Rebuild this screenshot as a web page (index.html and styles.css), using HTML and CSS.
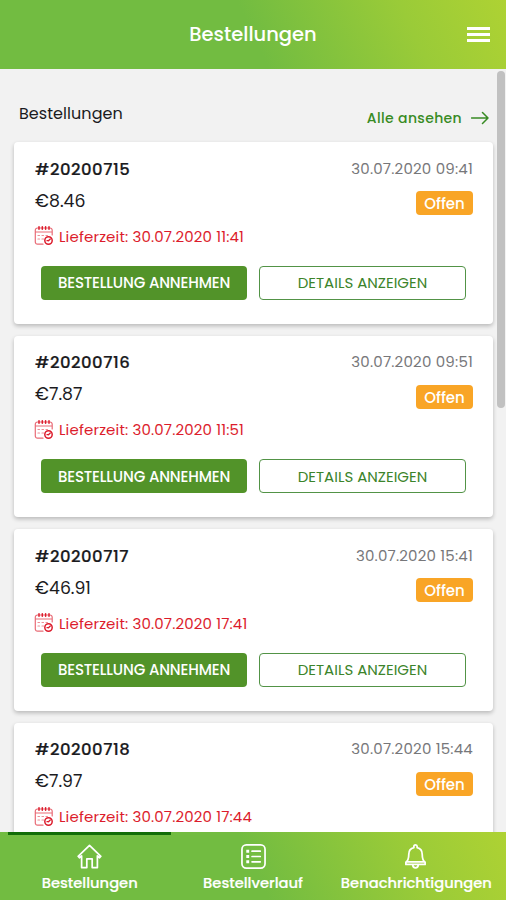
FILE: index.html
```html
<!DOCTYPE html>
<html lang="de">
<head>
<meta charset="utf-8">
<title>Bestellungen</title>
<link rel="stylesheet" href="styles.css">
</head>
<body>
<svg class="defs" aria-hidden="true">
  <symbol id="calendar" viewBox="0 0 20 20">
    <path d="M18.200 9V4.200a2.200 2.200 0 0 0-2.200-2.200H3.500a2.200 2.200 0 0 0-2.200 2.200v11.800a2.200 2.200 0 0 0 2.200 2.200H9M1.300 6h17" opacity=".65"/>
    <path d="M5 .8v2.400M8.300 .8v2.400M11.600 .8v2.400M15 .8v2.400" stroke-width="1.500"/>
    <path d="M4 9.500h1.500M8 9.500h1.500M12 9.500h1.500M4 13h1.500M8 13h1.500" opacity=".5"/>
    <circle cx="14.500" cy="14.500" r="3.700" stroke-width="1.500"/>
    <path d="M14.500 14.700l1.800-1.700M14.500 14.700h-1.500" stroke-width="1.300"/>
  </symbol>
</svg>
<div class="app">
  <header class="topbar">
    <h1 class="topbar-title">Bestellungen</h1>
    <button class="menu" aria-label="Menü"><i></i><i></i><i></i></button>
  </header>
  <main class="content">
    <div class="section-head">
      <h2 class="section-title">Bestellungen</h2>
      <a class="all"><span>Alle ansehen</span>
        <svg class="arrow" viewBox="0 0 18 14"><path d="M.5 7H17M11.500 1.500 17 7l-5.500 5.500"/></svg>
      </a>
    </div>
    <div class="orders">
      <article class="card">
        <div class="row"><strong class="number">#20200715</strong><time class="date">30.07.2020 09:41</time></div>
        <div class="row price-row"><span class="price">€8.46</span><span class="badge">Offen</span></div>
        <div class="delivery"><svg class="cal"><use href="#calendar"/></svg><span>Lieferzeit: 30.07.2020 11:41</span></div>
        <div class="actions"><button class="btn accept">BESTELLUNG ANNEHMEN</button><button class="btn details">DETAILS ANZEIGEN</button></div>
      </article>
      <article class="card">
        <div class="row"><strong class="number">#20200716</strong><time class="date">30.07.2020 09:51</time></div>
        <div class="row price-row"><span class="price">€7.87</span><span class="badge">Offen</span></div>
        <div class="delivery"><svg class="cal"><use href="#calendar"/></svg><span>Lieferzeit: 30.07.2020 11:51</span></div>
        <div class="actions"><button class="btn accept">BESTELLUNG ANNEHMEN</button><button class="btn details">DETAILS ANZEIGEN</button></div>
      </article>
      <article class="card">
        <div class="row"><strong class="number">#20200717</strong><time class="date">30.07.2020 15:41</time></div>
        <div class="row price-row"><span class="price">€46.91</span><span class="badge">Offen</span></div>
        <div class="delivery"><svg class="cal"><use href="#calendar"/></svg><span>Lieferzeit: 30.07.2020 17:41</span></div>
        <div class="actions"><button class="btn accept">BESTELLUNG ANNEHMEN</button><button class="btn details">DETAILS ANZEIGEN</button></div>
      </article>
      <article class="card">
        <div class="row"><strong class="number">#20200718</strong><time class="date">30.07.2020 15:44</time></div>
        <div class="row price-row"><span class="price">€7.97</span><span class="badge">Offen</span></div>
        <div class="delivery"><svg class="cal"><use href="#calendar"/></svg><span>Lieferzeit: 30.07.2020 17:44</span></div>
      </article>
    </div>
    <div class="scrollbar"></div>
  </main>
  <nav class="tabs">
    <a class="tab active">
      <svg class="tab-icon" viewBox="0 0 26 26"><path d="M1.200 12.800 13 1.500l11.800 11.300-1.300 1.500-2.300-1.900V24.500h-5.400V15.500h-5.600v9H4.800V12.400l-2.300 1.900z"/></svg>
      <span class="tab-label">Bestellungen</span>
    </a>
    <a class="tab history">
      <svg class="tab-icon" viewBox="0 0 26 26"><rect x="1" y="1" width="24" height="24" rx="4.500"/><path d="M11.500 7.500h8.500M11.500 13h8.500M11.500 18.500h8.500"/><path class="dots" d="M5.500 6h3v3h-3zM5.500 11.500h3v3h-3zM5.500 17h3v3h-3z"/></svg>
      <span class="tab-label">Bestellverlauf</span>
    </a>
    <a class="tab notices">
      <svg class="tab-icon" viewBox="0 0 26 26"><path d="M11.300 3.800V2.700a1.700 1.700 0 0 1 3.400 0v1.100c3.600.8 5.300 3.700 5.300 7 0 4.600.8 6.500 3 8.200v2.200H3V19c2.200-1.700 3-3.600 3-8.200 0-3.300 1.700-6.200 5.300-7zM4.500 18.500h17M10 21.500c.4 4.500 5.600 4.500 6 0"/></svg>
      <span class="tab-label">Benachrichtigungen</span>
    </a>
  </nav>
</div>
</body>
</html>
```
FILE: styles.css
```css
* { box-sizing: border-box; }
body { margin: 0; font-family: Poppins, Inter, "Open Sans", sans-serif; color: #1b1b1e; }
h1, h2 { margin: 0; font-weight: 400; }
button { font: inherit; border: 0; padding: 0; background: none; }
svg { display: block; fill: none; stroke: currentColor; stroke-linecap: round; stroke-linejoin: round; }
.defs { position: absolute; width: 0; height: 0; }
.app { width: 506px; height: 900px; display: flex; flex-direction: column; overflow: hidden; background: #f2f2f2; white-space: nowrap; }

.topbar, .tabs { flex: none; color: #fff; background: linear-gradient(65deg, #72bc41 0%, #72bc41 50%, #9acb38 80%, #aed233 100%); }
.topbar { height: 69px; display: grid; grid-template-columns: 1fr auto 1fr; align-items: center; padding-right: 16px; padding-left: 16px; }
.topbar-title { grid-column: 2; font-size: 19.5px; font-weight: 500; line-height: 28px; }
.menu { justify-self: end; width: 23px; display: flex; flex-direction: column; gap: 3px; color: #fff; }
.menu i { height: 3px; background: currentColor; }

.content { flex: 1; min-height: 0; position: relative; overflow: hidden; padding: 0 13px 0 14px; }
.section-head { height: 73px; padding: 34px 4px 0 5px; display: flex; justify-content: space-between; align-items: flex-start; }
.section-title { font-size: 16px; line-height: 22px; letter-spacing: .05px; }
.all { display: flex; align-items: center; gap: 9px; margin-top: 4px; color: #388b24; font-size: 14px; font-weight: 500; line-height: 22px; letter-spacing: .35px; }
.arrow { width: 18px; height: 14px; stroke-width: 1.5; }

.orders { display: flex; flex-direction: column; gap: 12px; }
.card { height: 181.5px; flex: none; padding: 15px 20px 0 21px; background: #fff; border-radius: 4px; box-shadow: 0 2px 4px rgba(0, 0, 0, .24); }
.row { display: flex; justify-content: space-between; align-items: center; height: 24px; }
.number { font-size: 16.5px; font-weight: 500; letter-spacing: .5px; -webkit-text-stroke: .2px currentColor; }
.date { font-size: 15px; color: #77777a; letter-spacing: .2px; margin-top: -2px; }
.price-row { height: 24px; margin-top: 10px; }
.price { font-size: 17.3px; margin-top: -5px; }
.badge { width: 57px; height: 24px; border-radius: 4px; background: #f9a526; color: #fff; font-size: 15px; font-weight: 500; line-height: 25px; text-align: center; }
.delivery { display: flex; align-items: center; gap: 5px; height: 22px; margin: 10px 0 0 -1px; color: #dc1c2c; font-size: 15px; letter-spacing: .14px; }
.cal { width: 20px; height: 20px; stroke-width: 1.2; }
.actions { display: grid; grid-template-columns: 206px 207px; gap: 12px; margin: 18.5px 0 0 6px; }
.btn { height: 34px; border-radius: 4px; font-size: 15px; }
.accept { color: #fff; background: #529329; font-weight: 500; letter-spacing: -.15px; }
.details { color: #3c842b; border: 1px solid #529346; }
.scrollbar { position: absolute; top: 2px; right: 1px; width: 8px; height: 337px; border-radius: 4px; background: #c1c1c1; }

.tabs { height: 68px; display: grid; grid-template-columns: repeat(3, 1fr); padding: 0 8px; }
.tab { position: relative; display: flex; flex-direction: column; align-items: center; padding-top: 12px; }
.active::before { content: ""; position: absolute; top: 0; left: 0; right: 0; height: 3px; background: #126d08; }
.tab-icon { width: 25px; height: 25px; stroke-width: 1.8; }
.dots { fill: currentColor; stroke: none; }
.tab-label { font-size: 14.7px; font-weight: 500; line-height: 22px; margin-top: 3px; -webkit-text-stroke: .2px currentColor; }
.history .tab-icon { margin-left: 1px; }
.notices .tab-icon { margin-right: 2px; }
```
